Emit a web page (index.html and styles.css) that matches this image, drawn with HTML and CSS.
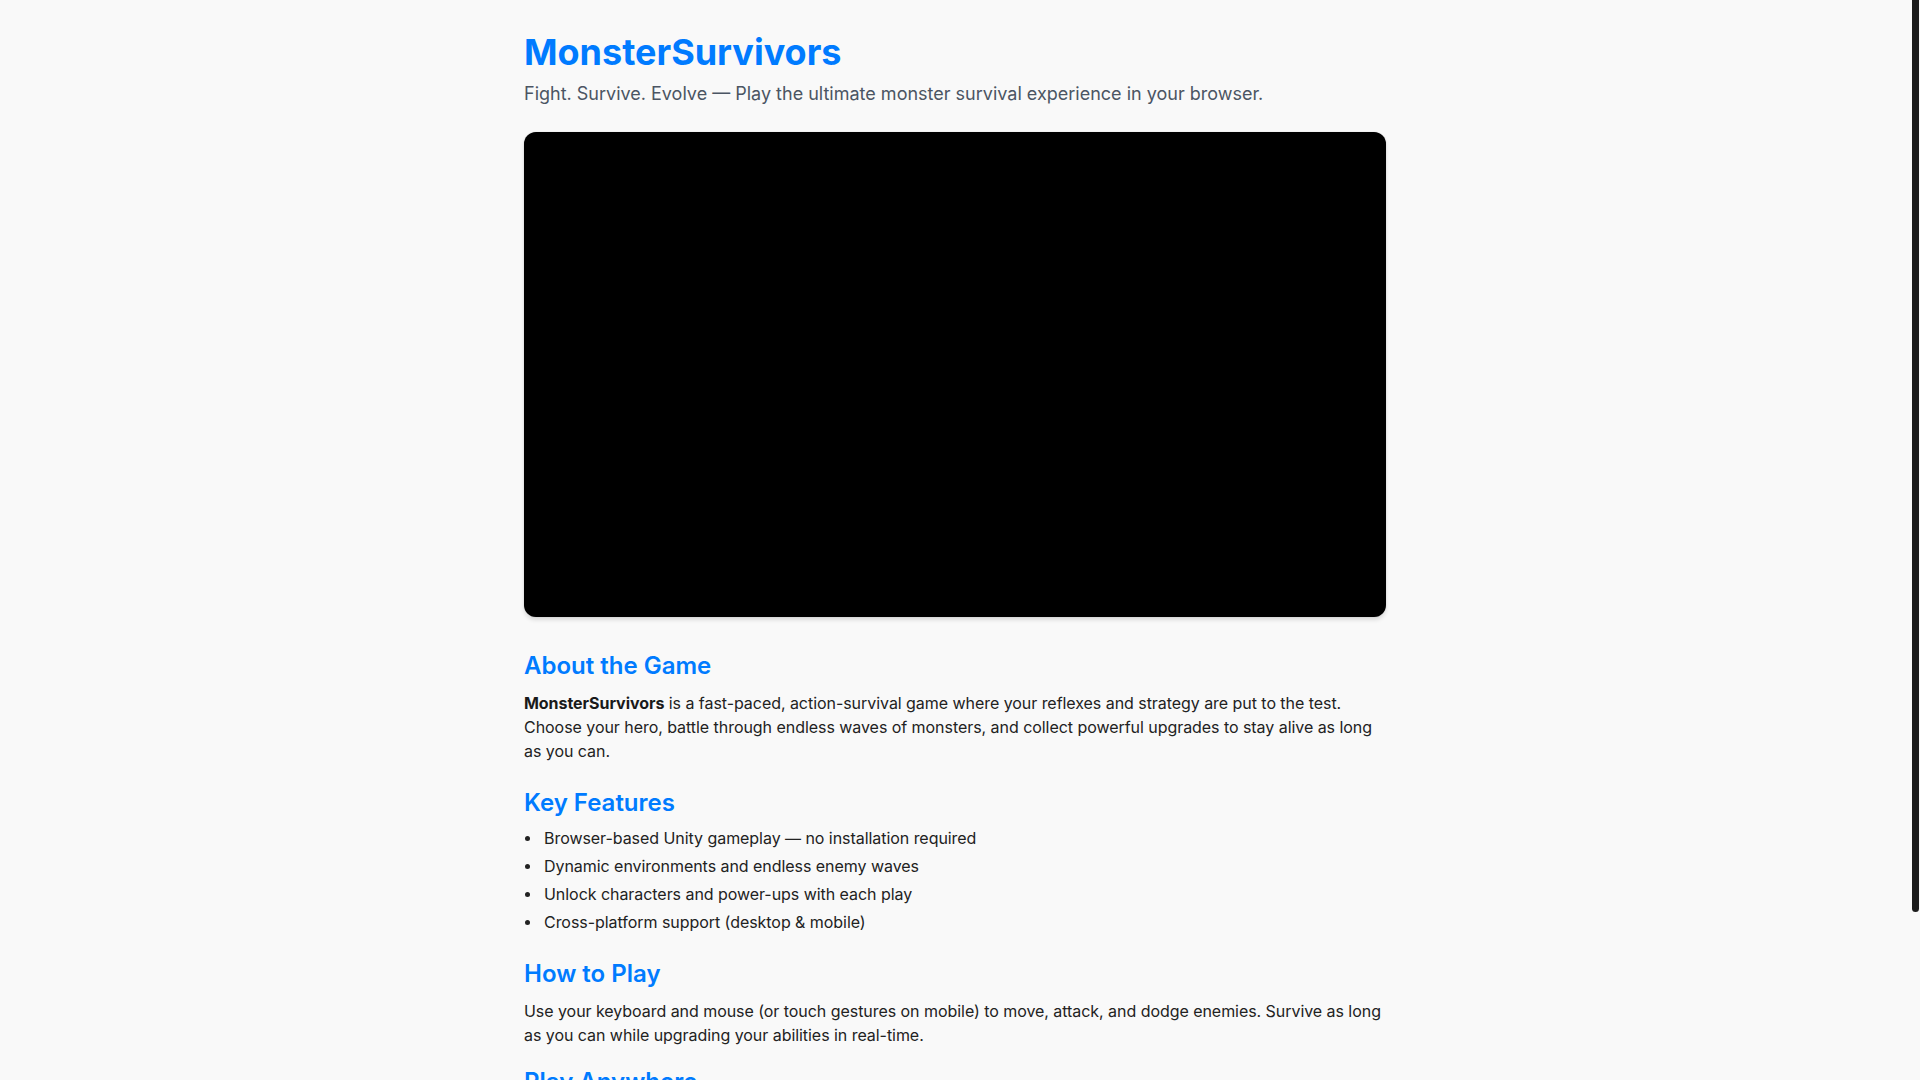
FILE: index.html
```html
<!DOCTYPE html>
<html lang="en">
<head>
<meta charset="utf-8">
<title>MonsterSurvivors</title>
<link rel="stylesheet" href="styles.css">
</head>
<body>
<div class="viewport">
  <main class="container">
    <header class="site-header">
      <h1 class="title">MonsterSurvivors</h1>
      <p class="tagline">Fight. Survive. Evolve — Play the ultimate monster survival experience in your browser.</p>
    </header>

    <div class="game-frame"></div>

    <section class="section">
      <h2 class="section-title">About the Game</h2>
      <p class="text"><strong>MonsterSurvivors</strong> is a fast-paced, action-survival game where your reflexes and strategy are put to the test. Choose your hero, battle through endless waves of monsters, and collect powerful upgrades to stay alive as long as you can.</p>
    </section>

    <section class="section">
      <h2 class="section-title">Key Features</h2>
      <ul class="features">
        <li>Browser-based Unity gameplay — no installation required</li>
        <li>Dynamic environments and endless enemy waves</li>
        <li>Unlock characters and power-ups with each play</li>
        <li>Cross-platform support (desktop &amp; mobile)</li>
      </ul>
    </section>

    <section class="section">
      <h2 class="section-title">How to Play</h2>
      <p class="text">Use your keyboard and mouse (or touch gestures on mobile) to move, attack, and dodge enemies. Survive as long as you can while upgrading your abilities in real-time.</p>
    </section>

    <section class="section section-last">
      <h2 class="section-title">Play Anywhere</h2>
      <p class="text">MonsterSurvivors runs directly in your browser on desktop and mobile devices. No downloads, no sign-ups — just open the page and start surviving.</p>
    </section>

    <footer class="footer">© 2025 MonsterSurvivors. All rights reserved.</footer>
  </main>
</div>
<div class="scrollbar" aria-hidden="true">
  <div class="scrollbar-thumb"></div>
</div>
</body>
</html>
```

FILE: styles.css
```css
html {
  height: 100%;
  overflow: hidden;
  background: #f9f9f9;
}

body {
  margin: 0;
  height: 100%;
  display: flex;
  background: #f9f9f9;
  color: #222222;
  font-family: Inter, "Noto Sans", "Liberation Sans", sans-serif;
  font-size: 16px;
  line-height: 24px;
  letter-spacing: -0.05px;
}

.viewport {
  flex: 1;
  height: 100%;
  overflow-y: auto;
  scrollbar-width: none;
}

.viewport::-webkit-scrollbar {
  display: none;
}

.scrollbar {
  width: 10px;
  flex: none;
  height: 100%;
  background: #f9f9f9;
  display: flex;
  justify-content: center;
}

.scrollbar-thumb {
  width: 7px;
  height: 912px;
  background: #1c1c1c;
  border-radius: 0 0 4px 4px;
}

.container {
  max-width: 862px;
  margin: 0 auto;
  padding: 30px 0 46px;
}

.site-header {
  display: flex;
  flex-direction: column;
  gap: 6px;
}

.title {
  margin: 0;
  font-size: 36px;
  line-height: 44px;
  font-weight: 700;
  letter-spacing: 0;
  color: #007bff;
}

.tagline {
  margin: 0;
  font-size: 18px;
  line-height: 27px;
  letter-spacing: 0;
  color: #4b5563;
}

.game-frame {
  margin: 25px 0 34px;
  aspect-ratio: 16 / 9;
  background: #000000;
  border-radius: 12px;
  box-shadow: 0 0 1px rgba(0, 0, 0, 0.25), 0 3px 4px rgba(0, 0, 0, 0.12);
}

.section {
  margin-top: 25px;
}

.section-last {
  margin-top: 20px;
}

.section-title {
  margin: 0 0 10px;
  font-size: 24px;
  line-height: 30px;
  font-weight: 600;
  letter-spacing: 0;
  color: #007bff;
}

.text {
  margin: 0;
}

.text strong {
  font-weight: 700;
  color: #1a1a1a;
}

.features {
  margin: -2px 0 0;
  padding: 0;
  list-style: none;
}

.features li {
  display: flex;
  align-items: center;
  line-height: 24px;
}

.features li::before {
  content: "";
  flex: none;
  width: 5px;
  height: 5px;
  border-radius: 50%;
  background: #222222;
  margin: 1px 14px 0 1px;
}

.features li + li {
  margin-top: 4px;
}

.footer {
  margin-top: 40px;
  font-size: 14px;
  line-height: 20px;
  color: #6b7280;
  text-align: center;
}
```
